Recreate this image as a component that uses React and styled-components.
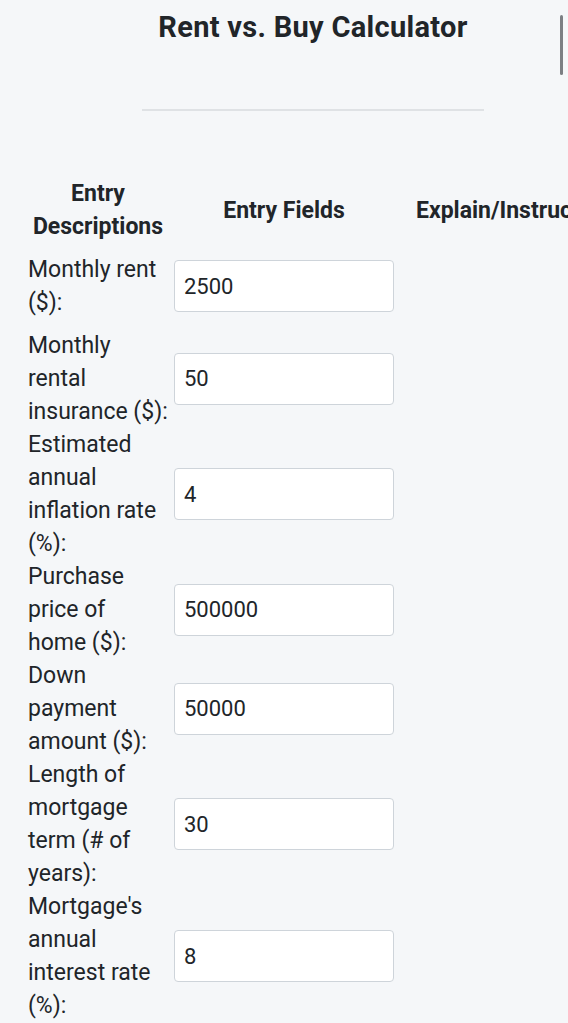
import React from "react";
import styled, { createGlobalStyle } from "styled-components";

const Global = createGlobalStyle`
  html, body {
    margin: 0;
    padding: 0;
    background: #f5f7f9;
    overflow: hidden;
  }
  body {
    font-family: Roboto, "Noto Sans", sans-serif;
    color: #212529;
  }
`;

const Page = styled.div`
  width: 570px;
  margin-left: 28px;
  padding-top: 8px;
`;

const Title = styled.h1`
  margin: 0;
  text-align: center;
  font-size: 29px;
  line-height: 38px;
  letter-spacing: 0.3px;
  font-weight: 700;
  color: #212529;
`;

const Rule = styled.hr`
  width: 342px;
  margin: 63px auto 0;
  border: 0;
  border-top: 2px solid #dfe2e5;
`;

const Table = styled.div`
  display: grid;
  grid-template-columns: 140px 232px max-content;
  margin-top: 66px;
  font-size: 23px;
  line-height: 33px;
`;

const Head = styled.div`
  font-weight: 700;
  text-align: center;
  padding: ${(p) => (p.$pad ? "0 16px" : "0")};
  display: flex;
  align-items: center;
  justify-content: center;
  white-space: ${(p) => (p.$nowrap ? "nowrap" : "normal")};
`;

const Label = styled.div`
  display: flex;
  align-items: center;
  min-height: ${(p) => p.$min || 0}px;
`;

const FieldCell = styled.div`
  display: flex;
  align-items: center;
  padding: 0 6px;
`;

const Input = styled.input`
  width: 100%;
  box-sizing: border-box;
  height: 52px;
  padding: 0 9px;
  border: 1px solid #ced4da;
  border-radius: 4px;
  background: #fff;
  font-family: Roboto, "Noto Sans", sans-serif;
  font-size: 22px;
  color: #212529;
  outline: none;
`;

const Empty = styled.div``;

const Scroll = styled.div`
  position: fixed;
  top: 15px;
  right: 5px;
  width: 3px;
  height: 60px;
  border-radius: 2px;
  background: #7c7f83;
`;

const rows = [
  { label: "Monthly rent ($):", value: "2500", min: 86 },
  { label: "Monthly rental insurance ($):", value: "50" },
  { label: "Estimated annual inflation rate (%):", value: "4" },
  { label: "Purchase price of home ($):", value: "500000" },
  { label: "Down payment amount ($):", value: "50000" },
  { label: "Length of mortgage term (# of years):", value: "30" },
  { label: "Mortgage's annual interest rate (%):", value: "8" },
];

export default function App() {
  return (
    <>
      <Global />
      <Page>
        <Title>Rent vs. Buy Calculator</Title>
        <Rule />
        <Table>
          <Head>Entry Descriptions</Head>
          <Head>Entry Fields</Head>
          <Head $pad $nowrap>Explain/Instructions</Head>
          {rows.map((r) => (
            <React.Fragment key={r.label}>
              <Label $min={r.min}>{r.label}</Label>
              <FieldCell>
                <Input type="text" defaultValue={r.value} />
              </FieldCell>
              <Empty />
            </React.Fragment>
          ))}
        </Table>
      </Page>
      <Scroll />
    </>
  );
}
